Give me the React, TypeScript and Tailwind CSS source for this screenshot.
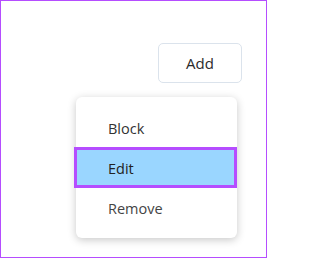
import React from 'react'

export default function App() {
  return (
    <div
      className="w-[267px] h-[258px] border border-[#b54dff] bg-white"
      style={{ fontFamily: '"Open Sans", "Noto Sans", sans-serif' }}
    >
      {/* Add button */}
      <div className="flex justify-end pt-[42px] pr-[24px]">
        <button className="w-[84px] h-[40px] rounded-[5px] border border-[#dbe3ec] bg-white pt-[1px] text-[15px] text-[#2b2b2b]">
          Add
        </button>
      </div>

      {/* Dropdown menu */}
      <div className="ml-[75px] mt-[14px] w-[161px] rounded-[6px] bg-white py-[10px] shadow-[0_2px_8px_rgba(0,0,0,0.22)]">
        <div className="h-[40px] flex items-center pl-[32px] pt-[3px] text-[14.5px] text-[#333]">Block</div>
        <div className="-ml-[2px] w-[163px] h-[41px] flex items-center pl-[31px] pt-[3px] border-[3px] border-[#b54dff] bg-[#9ad6ff] text-[14.5px] text-[#222]">
          Edit
        </div>
        <div className="h-[40px] flex items-center pl-[32px] pt-[2px] text-[14.5px] text-[#444]">Remove</div>
      </div>
    </div>
  )
}
